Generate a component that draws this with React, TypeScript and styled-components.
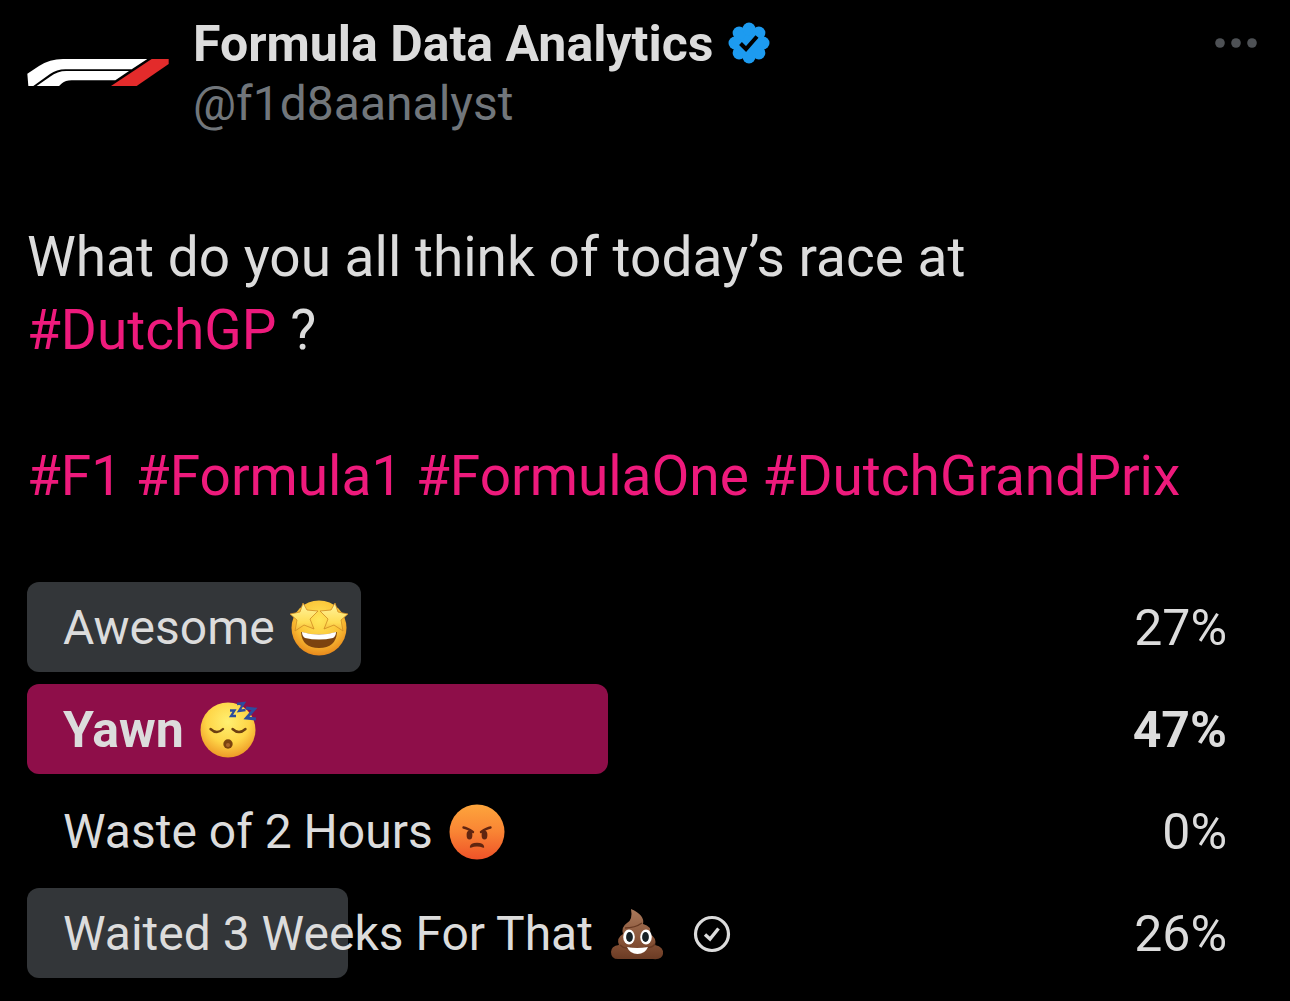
import React from "react";
import styled, { createGlobalStyle, css } from "styled-components";

const GlobalStyle = createGlobalStyle`
  *, *::before, *::after { box-sizing: border-box; }
  body {
    margin: 0;
    background: #000;
    color: #dcdcdc;
    font-family: Roboto, "Liberation Sans", sans-serif;
  }
`;

const Post = styled.article`
  padding: 1px 27px 23px;
`;

const Header = styled.header`
  display: flex;
  align-items: flex-start;
  gap: 24px;
`;

const Avatar = styled.a`
  display: flex;
  align-items: center;
  justify-content: center;
  flex: none;
  width: 142px;
  height: 142px;
  border-radius: 50%;
`;

const Author = styled.div`
  flex: 1;
  min-width: 0;
  padding-top: 13px;
`;

const NameLine = styled.div`
  display: flex;
  align-items: center;
  gap: 14px;
`;

const Name = styled.h1`
  margin: 0;
  font-size: 50px;
  line-height: 60px;
  font-weight: 700;
`;

const Handle = styled.a`
  display: block;
  color: #71767b;
  font-size: 48px;
  line-height: 60px;
  text-decoration: none;
`;

const MoreButton = styled.button`
  display: flex;
  margin: 32px 6px 0 0;
  padding: 0;
  border: 0;
  background: none;
  cursor: pointer;
`;

const Body = styled.div`
  margin-top: 78px;
  font-size: 55px;
  line-height: 73px;
`;

const Paragraph = styled.p`
  margin: 0 0 73px;

  &:last-child { margin-bottom: 69px; }
`;

const Hashtag = styled.a`
  color: #ee1a7c;
  text-decoration: none;
`;

const Poll = styled.ul`
  display: flex;
  flex-direction: column;
  gap: 12px;
  margin: 0;
  padding: 0;
  list-style: none;
`;

const Choice = styled.li<{ $share: number; $leading?: boolean }>`
  display: flex;
  align-items: center;
  height: 90px;
  padding: 2px 36px 0;
  border-radius: 12px;
  font-size: 48px;
  line-height: 60px;
  ${({ $leading }) =>
    $leading &&
    css`
      font-size: 50px;
      font-weight: 700;
    `}
  position: relative;
  isolation: isolate;

  &::before {
    content: "";
    position: absolute;
    z-index: -1;
    inset: 0 auto 0 0;
    width: ${({ $share }) => $share}%;
    border-radius: 12px;
    background: ${({ $leading }) => ($leading ? "#8e0e49" : "#333639")};
  }
`;

const Label = styled.span`
  display: flex;
  align-items: center;
  gap: 14px;
`;

const Voted = styled.span`
  display: flex;
  margin-left: 26px;
`;

const Percent = styled.span`
  margin-left: auto;
  font-size: 50px;
`;

const Logo = () => (
  <svg width="142" height="27" viewBox="51 88 424 81" role="img" aria-label="Formula Data Analytics">
    <path d="M51 132 L86 109 Q118 88 158 88 H411 L364 119 H165 Q139 119 119 133 L69 169 H54 Z" fill="#fff" />
    <path d="M79 169 L119 141 Q141 124 168 124 H356 L315 152 H184 Q165 152 155 161 L146 169 Z" fill="#fff" />
    <path d="M424 88 H475 V103 L379 169 H302 Z" fill="#e32b2b" />
  </svg>
);

const VerifiedBadge = () => (
  <svg width="44" height="44" viewBox="0 0 44 44" role="img" aria-label="Verified account">
    <g fill="#1d9bf0">
      <circle cx="22" cy="21" r="16" />
      {Array.from({ length: 8 }, (_, i) => {
        const a = (i * Math.PI) / 4;
        return <circle key={i} cx={22 + 14 * Math.cos(a)} cy={21 + 14 * Math.sin(a)} r="6.5" />;
      })}
    </g>
    <path d="M13.5 21.5 L19 27 L30 14.5" fill="none" stroke="#000" strokeWidth="4" />
  </svg>
);

const MoreIcon = () => (
  <svg width="42" height="20" viewBox="0 0 42 20" fill="#4e5155" aria-hidden="true">
    <circle cx="5" cy="10" r="4.8" />
    <circle cx="21" cy="10" r="4.8" />
    <circle cx="37" cy="10" r="4.8" />
  </svg>
);

const CheckIcon = () => (
  <svg width="38" height="38" viewBox="0 0 38 38" fill="none" stroke="#dcdcdc" role="img" aria-label="Your vote">
    <circle cx="19" cy="19" r="16.5" strokeWidth="3.2" />
    <path d="M12 19.5 L17 24 L25.5 13.5" strokeWidth="3.4" />
  </svg>
);

const StarStruck = () => (
  <svg width="60" height="60" viewBox="1 0 60 60" role="img" aria-label="Star-struck">
    <defs>
      <radialGradient id="gold" cx="50%" cy="35%" r="65%">
        <stop offset="0" stopColor="#ffe65a" />
        <stop offset="0.6" stopColor="#fbc437" />
        <stop offset="1" stopColor="#e8891c" />
      </radialGradient>
      <linearGradient id="star" x1="0" y1="0" x2="0" y2="1">
        <stop offset="0" stopColor="#fff4a0" />
        <stop offset="0.7" stopColor="#ffdd55" />
        <stop offset="1" stopColor="#f2b436" />
      </linearGradient>
    </defs>
    <circle cx="31" cy="30" r="27.5" fill="url(#gold)" />
    <path d="M13 34 Q31 39 49 34 Q48 50 31 50 Q14 50 13 34Z" fill="#7c430f" />
    <path d="M14 34 Q31 39 48 34 Q48 38 45 40 Q31 43 17 40 Q14 38 14 34Z" fill="#fff" />
    <g fill="url(#star)" stroke="#cf8a22" strokeWidth="0.8" strokeLinejoin="round">
      <path d="M15 5 L19 12 L30 13 L22 21 L26 31 L16 27 L7 33 L9 22 L2 16 L12 14Z" />
      <path d="M47 5 L43 12 L32 13 L40 21 L36 31 L46 27 L55 33 L53 22 L60 16 L50 14Z" />
    </g>
  </svg>
);

const Sleeping = () => (
  <svg width="60" height="60" viewBox="0 0 60 60" role="img" aria-label="Sleeping">
    <defs>
      <radialGradient id="yellow" cx="50%" cy="35%" r="65%">
        <stop offset="0" stopColor="#fff071" />
        <stop offset="0.6" stopColor="#fed547" />
        <stop offset="1" stopColor="#ee9a27" />
      </radialGradient>
    </defs>
    <circle cx="30" cy="30" r="27.5" fill="url(#yellow)" />
    <path d="M12.500 29 Q19 35 25 29 M34.500 29 Q41 35 47.500 29" fill="none" stroke="#6d4011" strokeWidth="2.4" strokeLinecap="round" />
    <circle cx="30" cy="44" r="4.7" fill="#7b430f" />
    <circle cx="30" cy="45" r="2" fill="#a9652b" />
    <g fill="none" stroke="#2c4d9f" strokeWidth="2.3">
      <path d="M32 10.500 H36.500 L33 16 H38" />
      <path d="M39 4 L46 3 L41 11 L47.500 10" />
      <path d="M48 8 L56.500 9 L48.500 18 L58 19" strokeWidth="3" />
    </g>
  </svg>
);

const Angry = () => (
  <svg width="60" height="60" viewBox="0 0 60 60" role="img" aria-label="Angry">
    <defs>
      <linearGradient id="anger" x1="0" y1="0" x2="0" y2="1">
        <stop offset="0" stopColor="#fda53c" />
        <stop offset="0.5" stopColor="#f98434" />
        <stop offset="1" stopColor="#ee5228" />
      </linearGradient>
    </defs>
    <circle cx="30" cy="30" r="27.5" fill="url(#anger)" />
    <ellipse cx="22.5" cy="33" rx="2.9" ry="4.5" fill="#602510" />
    <ellipse cx="37.5" cy="33" rx="2.9" ry="4.5" fill="#602510" />
    <path d="M16.500 25.500 Q20 26 26 30 M43.500 25.500 Q40 26 34 30" fill="none" stroke="#602510" strokeWidth="2.4" strokeLinecap="round" />
    <path d="M23.500 45 Q24 41.500 30 41.500 Q36 41.500 36.500 45 Q30 42.500 23.500 45Z" fill="#602510" stroke="#602510" strokeWidth="1.400" strokeLinejoin="round" />
  </svg>
);

const Poo = () => (
  <svg width="60" height="60" viewBox="0 0 60 60" role="img" aria-label="Pile of poo">
    <defs>
      <linearGradient id="brown" x1="0" y1="0" x2="0" y2="1">
        <stop offset="0" stopColor="#a9795b" />
        <stop offset="0.6" stopColor="#8a5539" />
        <stop offset="1" stopColor="#6b3b24" />
      </linearGradient>
    </defs>
    <path d="M24 5 Q38 11 36 20 Q45 22 43 30 Q50 34 48 41 Q57 43 56 50 Q55 56 46 55 H13 Q4 56 4 48 Q4 42 12 41 Q9 34 16 30 Q14 23 20 19 Q26 16 24 5Z" fill="url(#brown)" />
    <path d="M18 24 Q28 24 35 19 M13 41 Q18 46 24 43 M38 43 Q44 45 48 40" fill="none" stroke="#683a23" strokeWidth="1.4" />
    <ellipse cx="22" cy="33" rx="5.8" ry="7.5" fill="#fff" />
    <ellipse cx="39" cy="33" rx="5.8" ry="7.5" fill="#fff" />
    <ellipse cx="22.5" cy="33" rx="3.4" ry="4.9" fill="#182126" />
    <ellipse cx="38.5" cy="33" rx="3.4" ry="4.9" fill="#182126" />
    <path d="M20 43 Q30 45 41 43 Q38 50 30.5 50 Q23 50 20 43Z" fill="#fff" />
  </svg>
);

const choices = [
  { text: "Awesome", share: 27, Emoji: StarStruck },
  { text: "Yawn", share: 47, Emoji: Sleeping, leading: true },
  { text: "Waste of 2 Hours", share: 0, Emoji: Angry },
  { text: "Waited 3 Weeks For That", share: 26, Emoji: Poo, voted: true },
];

export default function App() {
  return (
    <>
      <GlobalStyle />
      <Post>
        <Header>
          <Avatar href="#profile"><Logo /></Avatar>
          <Author>
            <NameLine>
              <Name>Formula Data Analytics</Name>
              <VerifiedBadge />
            </NameLine>
            <Handle href="#profile">@f1d8aanalyst</Handle>
          </Author>
          <MoreButton aria-label="More"><MoreIcon /></MoreButton>
        </Header>
        <Body>
          <Paragraph>
            What do you all think of today’s race at<br />
            <Hashtag href="#DutchGP">#DutchGP</Hashtag> ?
          </Paragraph>
          <Paragraph>
            <Hashtag href="#F1">#F1</Hashtag> <Hashtag href="#Formula1">#Formula1</Hashtag>{" "}
            <Hashtag href="#FormulaOne">#FormulaOne</Hashtag>{" "}
            <Hashtag href="#DutchGrandPrix">#DutchGrandPrix</Hashtag>
          </Paragraph>
        </Body>
        <Poll>
          {choices.map(({ text, share, Emoji, leading, voted }) => (
            <Choice key={text} $share={share} $leading={leading}>
              <Label>{text}<Emoji /></Label>
              {voted && <Voted><CheckIcon /></Voted>}
              <Percent>{share}%</Percent>
            </Choice>
          ))}
        </Poll>
      </Post>
    </>
  );
}
